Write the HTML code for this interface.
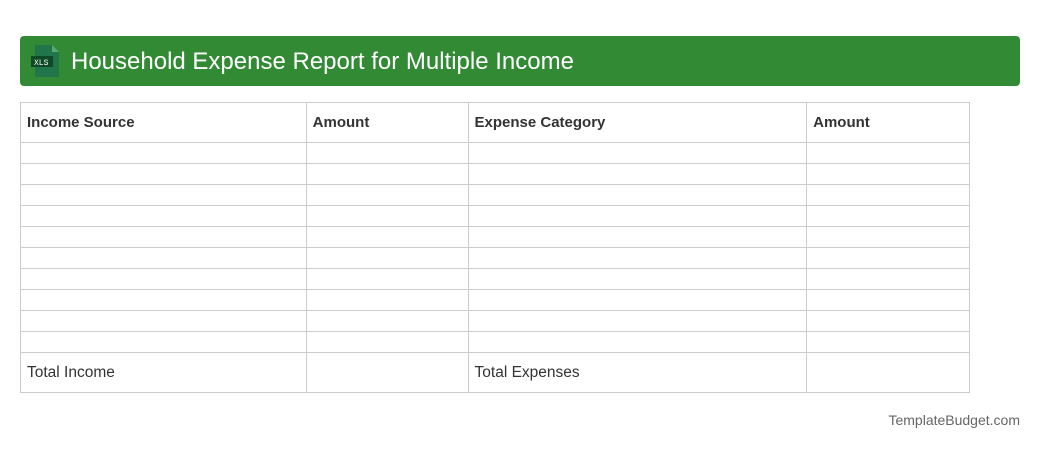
<!DOCTYPE html>
<html><head><style>
body{margin:0;width:1040px;height:450px;background:#fff;font-family:"Liberation Sans",sans-serif;position:relative;overflow:hidden}
.hdr{position:absolute;left:20px;top:36px;width:1000px;height:50px;background:#328a34;border-radius:4px}
.hdr span{position:absolute;left:51px;top:12px;color:#fff;font-size:24px}
table{position:absolute;left:20px;top:102px;border-collapse:collapse;width:950px}
td{border:1px solid #ccc;padding:0 6px;font-size:15.5px;color:#333}
tr.h td{height:39px;font-weight:bold;font-size:15px}
tr.r td{height:20px}
tr.t td{height:39px}
.ft{position:absolute;right:20px;top:412px;font-size:14px;color:#666}
</style></head><body>
<div class="hdr">
<svg style="position:absolute;left:11px;top:9px" width="28" height="32" viewBox="0 0 28 32">
<path d="M4 0H21L28 7V32H4Z" fill="#21754a"/><path d="M21 0V7H28Z" fill="#5aa877"/>
<rect x="0" y="11" width="22" height="11" fill="#0f4a26"/>
<text x="3" y="20" font-size="8" fill="#fff" font-family="Liberation Mono">XLS</text></svg>
<span>Household Expense Report for Multiple Income</span></div>
<table>
<colgroup><col style="width:286px"><col style="width:162px"><col style="width:339px"><col style="width:163px"></colgroup>
<tr class="h"><td>Income Source</td><td>Amount</td><td>Expense Category</td><td>Amount</td></tr>
<tr class="r"><td></td><td></td><td></td><td></td></tr>
<tr class="r"><td></td><td></td><td></td><td></td></tr>
<tr class="r"><td></td><td></td><td></td><td></td></tr>
<tr class="r"><td></td><td></td><td></td><td></td></tr>
<tr class="r"><td></td><td></td><td></td><td></td></tr>
<tr class="r"><td></td><td></td><td></td><td></td></tr>
<tr class="r"><td></td><td></td><td></td><td></td></tr>
<tr class="r"><td></td><td></td><td></td><td></td></tr>
<tr class="r"><td></td><td></td><td></td><td></td></tr>
<tr class="r"><td></td><td></td><td></td><td></td></tr>
<tr class="t"><td>Total Income</td><td></td><td>Total Expenses</td><td></td></tr>
</table>
<div class="ft">TemplateBudget.com</div>
</body></html>
